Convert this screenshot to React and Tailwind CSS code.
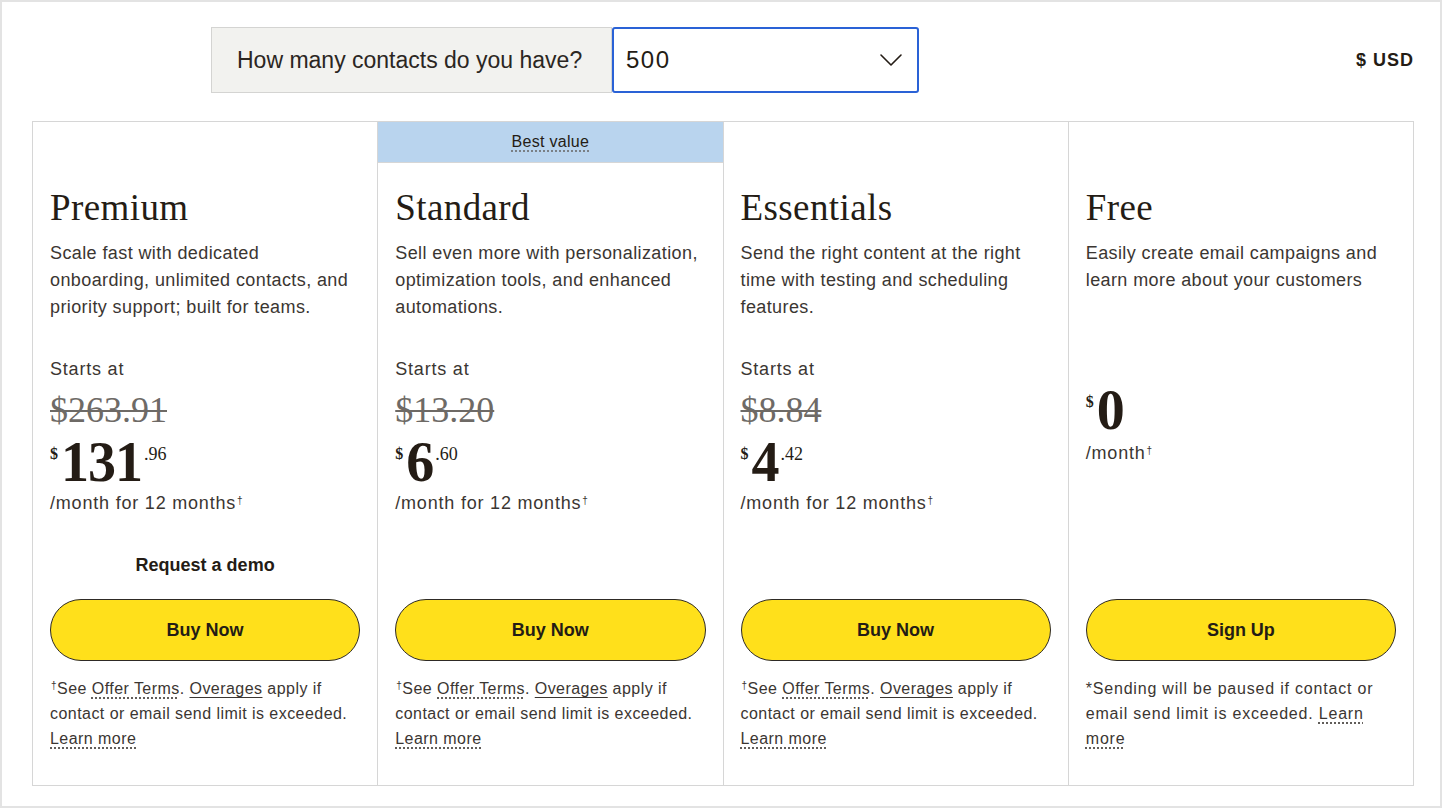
import React from 'react';

const plans = [
  {
    name: 'Premium',
    desc: 'Scale fast with dedicated onboarding, unlimited contacts, and priority support; built for teams.',
    was: '$263.91',
    whole: '131',
    cents: '.96',
    demo: true,
    cta: 'Buy Now',
  },
  {
    name: 'Standard',
    desc: 'Sell even more with personalization, optimization tools, and enhanced automations.',
    was: '$13.20',
    whole: '6',
    cents: '.60',
    best: true,
    cta: 'Buy Now',
  },
  {
    name: 'Essentials',
    desc: 'Send the right content at the right time with testing and scheduling features.',
    was: '$8.84',
    whole: '4',
    cents: '.42',
    cta: 'Buy Now',
  },
  {
    name: 'Free',
    desc: 'Easily create email campaigns and learn more about your customers',
    whole: '0',
    free: true,
    cta: 'Sign Up',
  },
];

const serif = { fontFamily: '"Liberation Serif", "Times New Roman", serif' };

function Dagger() {
  return <span className="relative -top-[5px] text-[10px] leading-none ml-[1px]">†</span>;
}

function Price({ plan }) {
  return (
    <div className="flex items-start" style={serif}>
      <span className="text-[16px] leading-none mt-[12px] mr-[3px] font-bold">$</span>
      <span className="text-[56px] leading-[56px] font-bold tracking-[-1px]">{plan.whole}</span>
      {plan.cents && (
        <span className="text-[18px] leading-none mt-[11px] ml-[2px]">{plan.cents}</span>
      )}
    </div>
  );
}

function PlanColumn({ plan }) {
  return (
    <div className="border-l border-[#d6d6d6] flex flex-col">
      <div
        className={`h-[41px] border-b flex items-center justify-center ${
          plan.best ? 'bg-[#b9d4ee] border-[#d6d6d6]' : 'border-transparent'
        }`}
      >
        {plan.best && (
          <span className="text-[16px] tracking-[0.3px] text-[#241c15] underline decoration-dotted decoration-[#6b6b6b] underline-offset-[4px]">
            Best value
          </span>
        )}
      </div>
      <div className="px-[17px] pt-[23px] pb-[34px] text-[#241c15]">
        <h2 className="text-[37px] leading-[44px] tracking-[0.4px] text-[#241c15]" style={serif}>
          {plan.name}
        </h2>
        <p className="mt-[10px] h-[81px] text-[18px] leading-[27px] tracking-[0.4px] text-[#3b3632]">
          {plan.desc}
        </p>
        <div className="h-[231px]">
          {plan.free ? (
            <div className="pt-[61px]">
              <Price plan={plan} />
              <div className="text-[18px] leading-[27px] tracking-[0.8px] text-[#3b3632] mt-[2px]">
                /month<Dagger />
              </div>
            </div>
          ) : (
            <div className="pt-[35px]">
              <div className="text-[18px] leading-[27px] tracking-[0.8px] text-[#3b3632]">Starts at</div>
              <div
                className="mt-[7px] text-[36px] leading-[40px] text-[#6e6a66] line-through decoration-[1.5px]"
                style={serif}
              >
                {plan.was}
              </div>
              <div className="mt-[4px]">
                <Price plan={plan} />
              </div>
              <div className="text-[18px] leading-[27px] tracking-[0.8px] text-[#3b3632]">
                /month for 12 months<Dagger />
              </div>
            </div>
          )}
        </div>
        <div className="h-[27px] text-center text-[18px] leading-[27px] font-bold text-[#241c15]">
          {plan.demo ? 'Request a demo' : ''}
        </div>
        <button className="mt-[20px] w-full h-[62px] rounded-full bg-[#ffe01b] border border-[#2e2a25] text-[18px] font-bold text-[#241c15]">
          {plan.cta}
        </button>
        <p className="mt-[15px] text-[16px] leading-[25px] tracking-[0.45px] text-[#3b3632]">
          {plan.free ? (
            <span className="tracking-[0.8px]">
              *Sending will be paused if contact or email send limit is exceeded.{' '}
              <span className="underline decoration-dotted underline-offset-[4px]">Learn more</span>
            </span>
          ) : (
            <>
              <Dagger />See{' '}
              <span className="underline decoration-dotted underline-offset-[4px]">Offer Terms</span>.{' '}
              <span className="underline underline-offset-[3px]">Overages</span> apply if contact or
              email send limit is exceeded.{' '}
              <span className="underline decoration-dotted underline-offset-[4px]">Learn more</span>
            </>
          )}
        </p>
      </div>
    </div>
  );
}

export default function App() {
  return (
    <div
      className="w-[1442px] h-[808px] bg-white border-2 border-[#e3e3e3] overflow-hidden"
      style={{ fontFamily: '"Liberation Sans", Arial, sans-serif' }}
    >
      <div className="pl-[30px] pr-[26px] pt-[25px]">
        <div className="flex items-center justify-between">
          <div className="flex ml-[179px]">
            <div className="h-[66px] w-[401px] bg-[#f2f2ef] border border-[#d4d4d2] flex items-center pl-[25px] text-[23px] text-[#2b2622]">
              How many contacts do you have?
            </div>
            <div className="h-[66px] w-[307px] border-2 border-[#2a62d6] rounded-[3px] bg-white flex items-center justify-between pl-[12px] pr-[14px] text-[24px] tracking-[1.5px] text-[#241c15]">
              <span>500</span>
              <svg width="24" height="24" viewBox="0 0 24 24" fill="none" stroke="#241c15" strokeWidth="1.6" strokeLinecap="round" strokeLinejoin="round">
                <path d="M2 7l10 10 10-10" />
              </svg>
            </div>
          </div>
          <div className="text-[18px] tracking-[1px] font-bold text-[#241c15]">$ USD</div>
        </div>
        <div className="mt-[28px] grid grid-cols-4 border-t border-r border-b border-[#d6d6d6]">
          {plans.map((p) => (
            <PlanColumn key={p.name} plan={p} />
          ))}
        </div>
      </div>
    </div>
  );
}
